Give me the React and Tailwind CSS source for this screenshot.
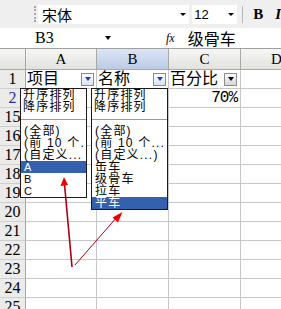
import React from "react";

const ROWS = ["1", "2", "15", "16", "17", "18", "19", "20", "21", "22", "23", "24", "25"];
const COLS = [
  { key: "A", w: "w-[71px]" },
  { key: "B", w: "w-[72px]" },
  { key: "C", w: "w-[72px]" },
  { key: "D", w: "w-[72px]" },
];

function FilterBtn({ active }) {
  return (
    <span
      className={
        active
          ? "ml-auto mr-[2px] w-[13px] h-[13px] shrink-0 border border-[#6f8fc4] bg-linear-to-b from-[#ffffff] to-[#d8e2f2] flex items-center justify-center"
          : "ml-auto mr-[3px] w-[13px] h-[13px] shrink-0 border border-[#8e8e8e] bg-linear-to-b from-[#fafafa] to-[#d6d6d6] flex items-center justify-center"
      }
    >
      <span
        className={
          active
            ? "w-0 h-0 border-l-[3px] border-r-[3px] border-t-[4px] border-l-transparent border-r-transparent border-t-[#1b3fb3]"
            : "w-0 h-0 border-l-[3px] border-r-[3px] border-t-[4px] border-l-transparent border-r-transparent border-t-black"
        }
      />
    </span>
  );
}

function Cell({ row, col }) {
  if (row === "1") {
    const label = { A: "项目", B: "名称", C: "百分比" }[col];
    if (!label) return null;
    return (
      <>
        <span className="pl-[1px] text-[16px] leading-none">{label}</span>
        <FilterBtn active={col !== "C"} />
      </>
    );
  }
  if (row === "2" && col === "C") {
    return <span className="ml-auto pr-[3px] text-[16px] leading-none font-['Liberation_Mono',monospace] tracking-[-1px]">70%</span>;
  }
  return null;
}

function DropList({ className, items }) {
  return (
    <div className={"absolute border border-[#1a1a1a] bg-white overflow-hidden font-['Liberation_Sans','Noto_Sans_CJK_SC',sans-serif] text-[12px] tracking-[1.2px] text-black " + className}>
      <div className="h-[12px] leading-[12px] pl-[2px] whitespace-nowrap">升序排列</div>
      <div className="h-[12px] leading-[12px] pl-[2px] whitespace-nowrap">降序排列</div>
      <div className="h-[12px] flex items-center">
        <div className="w-full h-px bg-[#9a9a9a]" />
      </div>
      {items.map((it) => (
        <div
          key={it.t}
          className={
            (it.sel ? "bg-[#3461ad] text-white " : "") +
            (it.small ? "text-[11px] pl-[3px] " : "pl-[3px] ") +
            "h-[12px] leading-[12px] whitespace-nowrap"
          }
        >
          {it.t}
        </div>
      ))}
    </div>
  );
}

export default function App() {
  return (
    <div className="relative w-[281px] h-[309px] overflow-hidden bg-white text-black font-['Liberation_Serif','Noto_Sans_CJK_SC',serif]">
      {/* toolbar */}
      <div className="h-[28px] bg-[#efefef] flex items-center">
        <div className="w-[34px]" />
        <div className="w-[3px] h-[16px] border-l-2 border-dotted border-[#a8a8a8]" />
        <div className="ml-[1px] w-[152px] h-[19px] bg-white flex items-center font-['Noto_Sans_CJK_SC',sans-serif] text-[15px] leading-none">
          <span className="pl-[4px]">宋体</span>
          <span className="ml-auto mr-[3px] w-0 h-0 border-l-[3px] border-r-[3px] border-t-[3px] border-l-transparent border-r-transparent border-t-black" />
        </div>
        <div className="ml-[3px] w-[45px] h-[19px] bg-white flex items-center font-['Liberation_Sans',sans-serif] text-[13px] leading-none">
          <span className="pl-[2px]">12</span>
          <span className="ml-auto mr-[3px] w-0 h-0 border-l-[3px] border-r-[3px] border-t-[3px] border-l-transparent border-r-transparent border-t-black" />
        </div>
        <div className="ml-[5px] w-px h-[17px] bg-[#b8b8b8]" />
        <span className="ml-[10px] font-bold text-[15px] leading-none">B</span>
        <span className="ml-[12px] italic font-bold text-[15px] leading-none">I</span>
      </div>

      {/* formula bar */}
      <div className="h-[21px] bg-white border-b border-[#a0a0a0] flex items-center">
        <div className="w-[113px] flex items-center">
          <span className="pl-[35px] text-[16px] leading-none">B3</span>
          <span className="ml-auto mr-[2px] w-0 h-0 border-l-[3px] border-r-[3px] border-t-[4px] border-l-transparent border-r-transparent border-t-black" />
        </div>
        <span className="ml-[53px] italic text-[12px] leading-none">fx</span>
        <span className="ml-[13px] text-[16px] leading-none font-['Noto_Sans_CJK_SC',sans-serif]">级骨车</span>
      </div>

      {/* column headers */}
      <div className="flex h-[21px]">
        <div className="w-[26px] shrink-0 border-r border-b border-[#a8a8a8] bg-linear-to-b from-[#f6f6f4] to-[#e2e2df]" />
        {COLS.map((c) => (
          <div
            key={c.key}
            className={
              c.w +
              " shrink-0 border-r border-b border-[#a8a8a8] flex items-center justify-center text-[15px] leading-none " +
              (c.key === "B"
                ? "bg-linear-to-b from-[#dbe5f5] to-[#bccbe6]"
                : "bg-linear-to-b from-[#f6f6f4] to-[#e2e2df]")
            }
          >
            {c.key}
          </div>
        ))}
      </div>

      {/* rows */}
      {ROWS.map((r) => (
        <div key={r} className="flex h-[19px]">
          <div
            className={
              "w-[26px] shrink-0 border-r border-b border-r-[#a8a8a8] border-b-[#cfcfcf] bg-[#ebebe9] flex items-center justify-center text-[16px] leading-none " +
              (r === "2" ? "text-[#2b2ba6]" : "")
            }
          >
            {r}
          </div>
          {COLS.map((c) => (
            <div key={c.key} className={c.w + " shrink-0 border-r border-b border-[#c6c6c6] flex items-center"}>
              <Cell row={r} col={c.key} />
            </div>
          ))}
        </div>
      ))}

      {/* autofilter lists */}
      <DropList
        className="left-[20px] top-[88px] w-[67px]"
        items={[
          { t: "(全部)" },
          { t: "(前 10 个..." },
          { t: "(自定义..." },
          { t: "A", sel: true, small: true },
          { t: "B", small: true },
          { t: "C", small: true },
        ]}
      />
      <DropList
        className="left-[91px] top-[88px] w-[77px]"
        items={[
          { t: "(全部)" },
          { t: "(前 10 个..." },
          { t: "(自定义...)" },
          { t: "缶车" },
          { t: "级骨车" },
          { t: "拉车" },
          { t: "平车", sel: true },
        ]}
      />

      {/* annotation arrows */}
      <svg className="absolute left-0 top-0 pointer-events-none" width="281" height="309" viewBox="0 0 281 309">
        <line x1="72" y1="267" x2="64.5" y2="184" stroke="#a80010" strokeWidth="1.6" />
        <polygon points="64,177 60.5,186 68,185" fill="#ee0000" />
        <line x1="75" y1="265" x2="117" y2="217" stroke="#a80010" strokeWidth="1" />
        <polygon points="122.5,212 112.5,217.5 118,222.5" fill="#ee0000" />
      </svg>
    </div>
  );
}
